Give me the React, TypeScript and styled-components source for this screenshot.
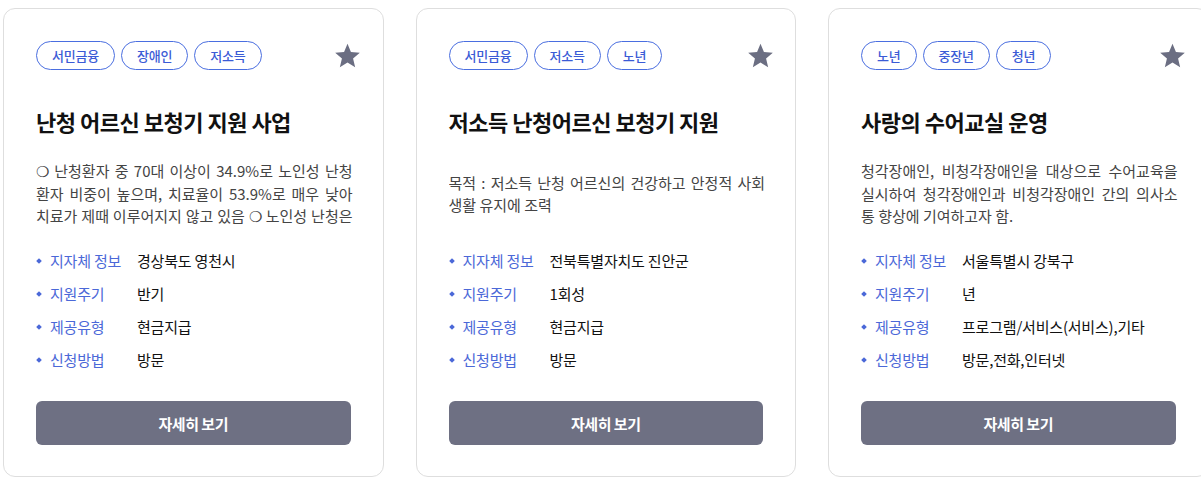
import React from "react";
import styled, { createGlobalStyle } from "styled-components";

const Global = createGlobalStyle`
  html, body { margin: 0; padding: 0; background: #ffffff; }
  body { font-family: "Noto Sans CJK KR", "Noto Sans", sans-serif; overflow: hidden; }
  * { box-sizing: border-box; }
`;

const Page = styled.div`
  display: flex;
  gap: 32px;
  padding: 8px 0 0 3px;
  width: 1300px;
`;

const Card = styled.div`
  flex: 0 0 380.5px;
  height: 469px;
  border: 1px solid #dedede;
  border-radius: 12px;
  background: #fff;
  padding: 32px 32px 31px 32px;
  display: flex;
  flex-direction: column;
`;

const TopRow = styled.div`
  display: flex;
  align-items: center;
  justify-content: space-between;
  height: 29px;
`;

const Tags = styled.div`
  display: flex;
  gap: 6px;
`;

const Tag = styled.span`
  height: 29px;
  padding: 0 15px;
  border: 1px solid #4a6ee0;
  border-radius: 15px;
  color: #3b5bd6;
  font-size: 13px;
  font-weight: 500;
  letter-spacing: -0.2px;
  display: flex;
  align-items: center;
`;

const StarButton = styled.span`
  width: 28px;
  height: 28px;
  margin-right: -11px;
  display: flex;
  align-items: center;
  justify-content: center;
`;

const Title = styled.h2`
  margin: 36px 0 0;
  font-size: 22px;
  line-height: 30px;
  font-weight: 700;
  letter-spacing: -0.5px;
  color: #111;
`;

const DescBox = styled.div`
  margin-top: 18px;
  height: 80px;
  display: flex;
  align-items: center;
`;

const Desc = styled.p`
  margin: 0 -2px 0 0;
  font-size: 15px;
  line-height: 22.5px;
  color: #444;
  letter-spacing: 0;
  text-align: justify;
  max-height: 67.5px;
  overflow: hidden;
`;

const InfoList = styled.ul`
  list-style: none;
  margin: 10px 0 0;
  padding: 0;
`;

const InfoRow = styled.li`
  display: flex;
  align-items: center;
  height: 33px;
  font-size: 15px;
  letter-spacing: -0.2px;
`;

const Label = styled.span`
  flex: 0 0 101px;
  display: flex;
  align-items: center;
  color: #4b68d8;
  white-space: nowrap;
  &::before {
    content: "";
    flex: 0 0 4px;
    width: 4px;
    height: 4px;
    background: #4b68d8;
    transform: rotate(45deg);
    margin: 0 9px 0 1px;
  }
`;

const Value = styled.span`
  color: #111;
  white-space: nowrap;
`;

const DetailButton = styled.button`
  margin-top: auto;
  height: 44px;
  border: none;
  border-radius: 6px;
  background: #6e7083;
  color: #fff;
  font-family: inherit;
  font-size: 15px;
  font-weight: 700;
  letter-spacing: -0.5px;
  cursor: pointer;
`;

const Star = () => (
  <svg width="27" height="26" viewBox="0 0 24 23">
    <path
      d="M12 0.6l3.05 7.3 7.9 0.65-6 5.15 1.85 7.7L12 17.3l-6.8 4.1 1.85-7.7-6-5.15 7.9-0.65z"
      fill="#6b6e82"
    />
  </svg>
);

type Item = {
  tags: string[];
  title: string;
  desc: string;
  info: [string, string][];
};

const items: Item[] = [
  {
    tags: ["서민금융", "장애인", "저소득"],
    title: "난청 어르신 보청기 지원 사업",
    desc:
      "❍ 난청환자 중 70대 이상이 34.9%로 노인성 난청 환자 비중이 높으며, 치료율이 53.9%로 매우 낮아 치료가 제때 이루어지지 않고 있음 ❍ 노인성 난청은 의사소통 장애와 사회적 고립을 유발하므로 보청기 지원이 필요함",
    info: [
      ["지자체 정보", "경상북도 영천시"],
      ["지원주기", "반기"],
      ["제공유형", "현금지급"],
      ["신청방법", "방문"],
    ],
  },
  {
    tags: ["서민금융", "저소득", "노년"],
    title: "저소득 난청어르신 보청기 지원",
    desc: "목적 : 저소득 난청 어르신의 건강하고 안정적 사회생활 유지에 조력",
    info: [
      ["지자체 정보", "전북특별자치도 진안군"],
      ["지원주기", "1회성"],
      ["제공유형", "현금지급"],
      ["신청방법", "방문"],
    ],
  },
  {
    tags: ["노년", "중장년", "청년"],
    title: "사랑의 수어교실 운영",
    desc:
      "청각장애인, 비청각장애인을 대상으로 수어교육을 실시하여 청각장애인과 비청각장애인 간의 의사소통 향상에 기여하고자 함.",
    info: [
      ["지자체 정보", "서울특별시 강북구"],
      ["지원주기", "년"],
      ["제공유형", "프로그램/서비스(서비스),기타"],
      ["신청방법", "방문,전화,인터넷"],
    ],
  },
];

export default function App() {
  return (
    <>
      <Global />
      <Page>
        {items.map((it) => (
          <Card key={it.title}>
            <TopRow>
              <Tags>
                {it.tags.map((t) => (
                  <Tag key={t}>{t}</Tag>
                ))}
              </Tags>
              <StarButton>
                <Star />
              </StarButton>
            </TopRow>
            <Title>{it.title}</Title>
            <DescBox>
              <Desc>{it.desc}</Desc>
            </DescBox>
            <InfoList>
              {it.info.map(([k, v]) => (
                <InfoRow key={k}>
                  <Label>{k}</Label>
                  <Value>{v}</Value>
                </InfoRow>
              ))}
            </InfoList>
            <DetailButton>자세히 보기</DetailButton>
          </Card>
        ))}
      </Page>
    </>
  );
}
